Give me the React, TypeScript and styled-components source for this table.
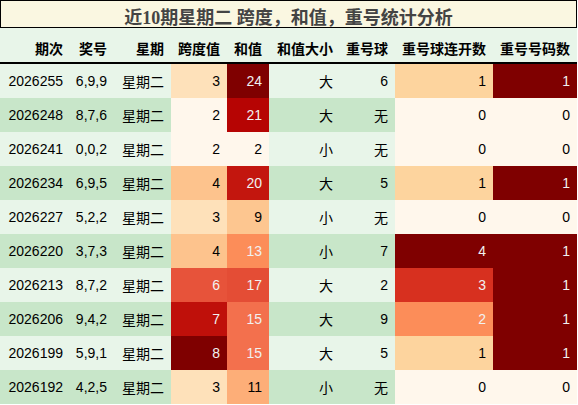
import React from "react";
import styled, { createGlobalStyle } from "styled-components";

const Global = createGlobalStyle`
  html, body { margin: 0; padding: 0; background: #ffffff; }
  body { font-family: "Liberation Sans", "Noto Sans CJK SC", sans-serif; }
`;

const COLS = "70px 44px 57px 56px 42px 71px 55px 98px 84px";

const Wrap = styled.div`
  width: 577px;
  display: flex;
  flex-direction: column;
`;

const Title = styled.div`
  box-sizing: border-box;
  height: 28px;
  border: 1px solid #000;
  background: #faf7e1;
  color: #444444;
  font-family: "Liberation Serif", "Noto Sans CJK SC", serif;
  font-weight: bold;
  font-size: 18px;
  display: flex;
  align-items: center;
  justify-content: center;
  padding-top: 3px;
  white-space: nowrap;
`;

const Row = styled.div<{ $alt?: boolean; $head?: boolean }>`
  display: grid;
  grid-template-columns: ${COLS};
  height: ${(p) => (p.$head ? "36px" : "34px")};
  box-sizing: border-box;
  background: ${(p) => (p.$alt ? "#c8e6c9" : "#e8f5e9")};
  border-bottom: ${(p) => (p.$head ? "2px solid #000" : "none")};
`;

const HeadCell = styled.div`
  display: flex;
  align-items: center;
  justify-content: flex-end;
  padding: 6px 7px 0 0;
  font-family: "Liberation Sans", "Noto Sans CJK SC", sans-serif;
  font-weight: bold;
  font-size: 14px;
  color: #000;
  white-space: nowrap;
`;

const Cell = styled.div<{ $bg?: string; $light?: boolean }>`
  display: flex;
  align-items: center;
  justify-content: flex-end;
  padding-right: 7px;
  font-size: 14px;
  font-family: "Liberation Sans", "Noto Sans CJK SC", sans-serif;
  color: ${(p) => (p.$light ? "#f1f1f1" : "#000000")};
  background: ${(p) => p.$bg ?? "transparent"};
  white-space: nowrap;
`;

// OrRd colormap
const STOPS: [number, number, number][] = [
  [255, 247, 236],
  [254, 232, 200],
  [253, 212, 158],
  [253, 187, 132],
  [252, 141, 89],
  [239, 101, 72],
  [215, 48, 31],
  [179, 0, 0],
  [127, 0, 0],
];

function orrd(t: number): [number, number, number] {
  const x = Math.max(0, Math.min(1, t)) * (STOPS.length - 1);
  const i = Math.min(STOPS.length - 2, Math.floor(x));
  const f = x - i;
  const a = STOPS[i];
  const b = STOPS[i + 1];
  return [0, 1, 2].map((k) => Math.round(a[k] + (b[k] - a[k]) * f)) as [
    number,
    number,
    number
  ];
}

function lum(c: [number, number, number]) {
  const ch = c.map((v) => {
    const s = v / 255;
    return s <= 0.03928 ? s / 12.92 : Math.pow((s + 0.055) / 1.055, 2.4);
  });
  return 0.2126 * ch[0] + 0.7152 * ch[1] + 0.0722 * ch[2];
}

type Rec = {
  id: string;
  nums: string;
  day: string;
  span: number;
  sum: number;
  size: string;
  rep: string;
  repRun: number;
  repCnt: number;
};

const DATA: Rec[] = [
  { id: "2026255", nums: "6,9,9", day: "星期二", span: 3, sum: 24, size: "大", rep: "6", repRun: 1, repCnt: 1 },
  { id: "2026248", nums: "8,7,6", day: "星期二", span: 2, sum: 21, size: "大", rep: "无", repRun: 0, repCnt: 0 },
  { id: "2026241", nums: "0,0,2", day: "星期二", span: 2, sum: 2, size: "小", rep: "无", repRun: 0, repCnt: 0 },
  { id: "2026234", nums: "6,9,5", day: "星期二", span: 4, sum: 20, size: "大", rep: "5", repRun: 1, repCnt: 1 },
  { id: "2026227", nums: "5,2,2", day: "星期二", span: 3, sum: 9, size: "小", rep: "无", repRun: 0, repCnt: 0 },
  { id: "2026220", nums: "3,7,3", day: "星期二", span: 4, sum: 13, size: "小", rep: "7", repRun: 4, repCnt: 1 },
  { id: "2026213", nums: "8,7,2", day: "星期二", span: 6, sum: 17, size: "大", rep: "2", repRun: 3, repCnt: 1 },
  { id: "2026206", nums: "9,4,2", day: "星期二", span: 7, sum: 15, size: "大", rep: "9", repRun: 2, repCnt: 1 },
  { id: "2026199", nums: "5,9,1", day: "星期二", span: 8, sum: 15, size: "大", rep: "5", repRun: 1, repCnt: 1 },
  { id: "2026192", nums: "4,2,5", day: "星期二", span: 3, sum: 11, size: "小", rep: "无", repRun: 0, repCnt: 0 },
];

function range(key: keyof Rec) {
  const vals = DATA.map((d) => d[key] as number);
  return [Math.min(...vals), Math.max(...vals)];
}

const RANGES = {
  span: range("span"),
  sum: range("sum"),
  repRun: range("repRun"),
  repCnt: range("repCnt"),
};

function Grad({ v, k }: { v: number; k: keyof typeof RANGES }) {
  const [mn, mx] = RANGES[k];
  const c = orrd(mx === mn ? 0 : (v - mn) / (mx - mn));
  const light = lum(c) < 0.408;
  return (
    <Cell $bg={`rgb(${c[0]},${c[1]},${c[2]})`} $light={light}>
      {v}
    </Cell>
  );
}

const HEADERS = ["期次", "奖号", "星期", "跨度值", "和值", "和值大小", "重号球", "重号球连开数", "重号号码数"];

export default function App() {
  return (
    <>
      <Global />
      <Wrap>
        <Title>近10期星期二 跨度，和值，重号统计分析</Title>
        <Row $head>
          {HEADERS.map((h) => (
            <HeadCell key={h}>{h}</HeadCell>
          ))}
        </Row>
        {DATA.map((d, i) => (
          <Row key={d.id} $alt={i % 2 === 1}>
            <Cell>{d.id}</Cell>
            <Cell>{d.nums}</Cell>
            <Cell>{d.day}</Cell>
            <Grad v={d.span} k="span" />
            <Grad v={d.sum} k="sum" />
            <Cell>{d.size}</Cell>
            <Cell>{d.rep}</Cell>
            <Grad v={d.repRun} k="repRun" />
            <Grad v={d.repCnt} k="repCnt" />
          </Row>
        ))}
      </Wrap>
    </>
  );
}
